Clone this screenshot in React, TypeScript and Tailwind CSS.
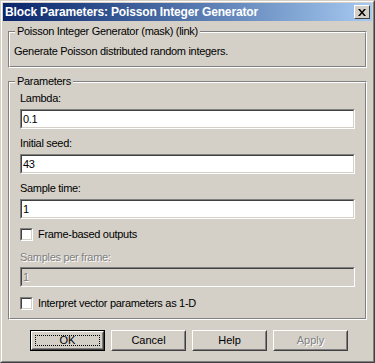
import React from "react";

const font = { fontFamily: '"Liberation Sans", Arial, sans-serif' };

function Etched({ children, className = "" }: { children: React.ReactNode; className?: string }) {
  return (
    <div className={"relative border border-t-[#808080] border-l-[#808080] border-b-white border-r-white " + className}>
      <div className="border border-t-white border-l-white border-b-[#808080] border-r-[#808080] h-full">
        {children}
      </div>
    </div>
  );
}

function Sunken({ value, disabled = false }: { value: string; disabled?: boolean }) {
  return (
    <div className="h-[20px] border border-t-[#808080] border-l-[#808080] border-b-white border-r-white">
      <div
        className={
          "h-full border border-t-[#404040] border-l-[#404040] border-b-[#D4D0C8] border-r-[#D4D0C8] flex items-center pl-[1px] text-[11px] " +
          (disabled ? "bg-[#D4D0C8] text-[#808080] [text-shadow:1px_1px_0_#ffffff]" : "bg-white text-black")
        }
      >
        {value}
      </div>
    </div>
  );
}

function Checkbox({ label }: { label: string }) {
  return (
    <div className="flex items-center h-[13px]">
      <div className="w-[13px] h-[13px] border border-t-[#808080] border-l-[#808080] border-b-white border-r-white">
        <div className="w-full h-full bg-white border border-t-[#404040] border-l-[#404040] border-b-[#D4D0C8] border-r-[#D4D0C8]" />
      </div>
      <span className="ml-[5px] text-[11px] leading-[13px] tracking-[-0.3px]">{label}</span>
    </div>
  );
}

function Button({ label, def = false, disabled = false }: { label: string; def?: boolean; disabled?: boolean }) {
  const inner = (
    <div className="h-full border border-t-white border-l-white border-b-[#404040] border-r-[#404040]">
      <div className="h-full border border-t-[#D4D0C8] border-l-[#D4D0C8] border-b-[#808080] border-r-[#808080] flex items-center justify-center relative">
        {def && <div className="absolute inset-[2px] border border-dotted border-black" />}
        <span
          className={
            "text-[11px] " + (disabled ? "text-[#808080] [text-shadow:1px_1px_0_#ffffff]" : "text-black")
          }
        >
          {label}
        </span>
      </div>
    </div>
  );
  return (
    <div className={"w-[75px] h-[21px] " + (def ? "border border-black" : "")}>
      {def ? <div className="h-full">{inner}</div> : inner}
    </div>
  );
}

export default function App() {
  return (
    <div style={font} className="w-[375px] h-[363px] text-black">
      <div className="w-full h-full border border-t-[#D4D0C8] border-l-[#D4D0C8] border-b-[#404040] border-r-[#404040]">
        <div className="w-full h-full border border-t-white border-l-white border-b-[#808080] border-r-[#808080] bg-[#D4D0C8] p-[1px] flex flex-col">
          {/* title bar */}
          <div className="h-[18px] bg-gradient-to-r from-[#0A246A] to-[#A6CAF0] flex items-center justify-between pl-[2px] pr-[2px]">
            <span className="text-white font-bold text-[12px] leading-none tracking-[-0.15px]">Block Parameters: Poisson Integer Generator</span>
            <div className="w-[16px] h-[14px] border border-t-white border-l-white border-b-[#404040] border-r-[#404040] bg-[#D4D0C8] flex items-center justify-center">
              <svg width="8" height="7" viewBox="0 0 8 7">
                <path d="M0 0h2l2 2.5L6 0h2L5 3.5 8 7H6L4 4.5 2 7H0l3-3.5z" fill="#000" />
              </svg>
            </div>
          </div>

          <div className="px-[5px] flex flex-col">
            {/* group 1 */}
            <Etched className="mt-[10px] h-[37px]">
              <div className="absolute left-[6px] top-[-7px] bg-[#D4D0C8] px-[2px] text-[11px] leading-[13px] tracking-[-0.3px]">
                Poisson Integer Generator (mask) (link)
              </div>
              <div className="pt-[12px] pl-[4px] text-[11px] leading-[13px] tracking-[-0.3px]">
                Generate Poisson distributed random integers.
              </div>
            </Etched>

            {/* group 2 */}
            <Etched className="mt-[13px]">
              <div className="absolute left-[6px] top-[-7px] bg-[#D4D0C8] px-[2px] text-[11px] leading-[13px] tracking-[-0.3px]">
                Parameters
              </div>
              <div className="px-[10px] pt-[8px] pb-[8px] flex flex-col text-[11px] tracking-[-0.3px]">
                <div className="h-[14px] leading-[14px]">Lambda:</div>
                <div className="mt-[4px]"><Sunken value="0.1" /></div>
                <div className="mt-[7px] h-[14px] leading-[14px]">Initial seed:</div>
                <div className="mt-[4px]"><Sunken value="43" /></div>
                <div className="mt-[7px] h-[14px] leading-[14px]">Sample time:</div>
                <div className="mt-[4px]"><Sunken value="1" /></div>
                <div className="mt-[9px]"><Checkbox label="Frame-based outputs" /></div>
                <div className="mt-[9px] h-[14px] leading-[14px] text-[#808080] [text-shadow:1px_1px_0_#ffffff]">Samples per frame:</div>
                <div className="mt-[3px]"><Sunken value="1" disabled /></div>
                <div className="mt-[10px]"><Checkbox label="Interpret vector parameters as 1-D" /></div>
              </div>
            </Etched>

            {/* buttons */}
            <div className="mt-[10px] flex pl-[22px] gap-[6px]">
              <Button label="OK" def />
              <Button label="Cancel" />
              <Button label="Help" />
              <Button label="Apply" disabled />
            </div>
          </div>
        </div>
      </div>
    </div>
  );
}
